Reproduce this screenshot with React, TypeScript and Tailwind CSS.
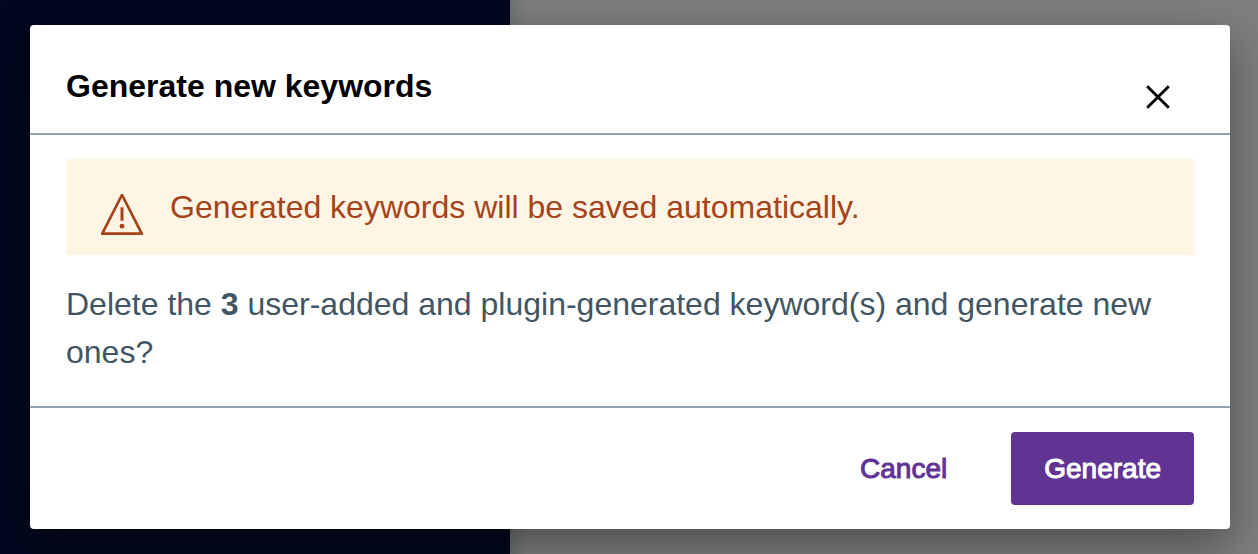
import { useState } from "react";

function CloseIcon() {
  return (
    <svg viewBox="0 0 24 24" className="size-6" fill="none" stroke="currentColor" strokeWidth="2.9" aria-hidden="true">
      <path d="M1.200 1.200 22.800 22.800M22.800 1.200 1.200 22.800" />
    </svg>
  );
}

function WarningIcon() {
  return (
    <svg viewBox="0 0 48 48" className="mt-2 -mb-2 size-12 shrink-0" aria-hidden="true">
      <path
        fill="currentColor"
        fillRule="evenodd"
        d="M23 3h2L45 42v2H3v-2ZM24 6.800 6.500 41.200h35Z"
      />
      <path d="M22.500 16.300h3v13.500h-3Z" fill="currentColor" />
      <circle cx="24" cy="35.200" r="2.400" fill="currentColor" />
    </svg>
  );
}

export default function App() {
  const [open, setOpen] = useState(true);
  const close = () => setOpen(false);
  return (
    <div className="flex min-h-screen bg-[linear-gradient(to_right,#03081f_510px,#6f7374_510px,#7f7f7f_528px)] pt-[25px] pr-7 pb-[25px] pl-[30px] font-['Liberation_Sans',Arial,sans-serif]">
      {open && (
        <div role="dialog" aria-modal="true" aria-labelledby="dialog-title" className="flex w-full flex-col self-start rounded bg-white shadow-[0_16px_48px_rgba(0,0,0,0.4)]">
          <header className="flex items-end justify-between border-b-2 border-[#94a2b0] px-9 pt-9 pb-6">
            <h1 id="dialog-title" className="pt-0.5 text-[32px] leading-[46px] font-bold text-black">Generate new keywords</h1>
            <button type="button" aria-label="Close" onClick={close} className="mr-6 text-black">
              <CloseIcon />
            </button>
          </header>
          <div className="px-9 pt-6 pb-[30px]">
            <div role="alert" className="flex gap-6 bg-[#fef5e4] px-8 py-6 text-[#a5431b]">
              <WarningIcon />
              <p className="text-[32px] leading-12">Generated keywords will be saved automatically.</p>
            </div>
            <p className="mt-[25px] text-[32px] leading-12 text-[#425563]">
              Delete the <strong>3</strong> user-added and plugin-generated keyword(s) and generate new ones?
            </p>
          </div>
          <footer className="flex justify-end gap-8 border-t-2 border-[#94a2b0] px-9 py-6">
            <button type="button" onClick={close} className="px-8 pt-[13px] pb-3 text-[28px] leading-12 text-[#613494] [-webkit-text-stroke:1px]">Cancel</button>
            <button type="button" onClick={close} className="rounded bg-[#613494] px-[33px] pt-[13px] pb-3 text-[28px] leading-12 text-white [-webkit-text-stroke:1px]">Generate</button>
          </footer>
        </div>
      )}
    </div>
  );
}
